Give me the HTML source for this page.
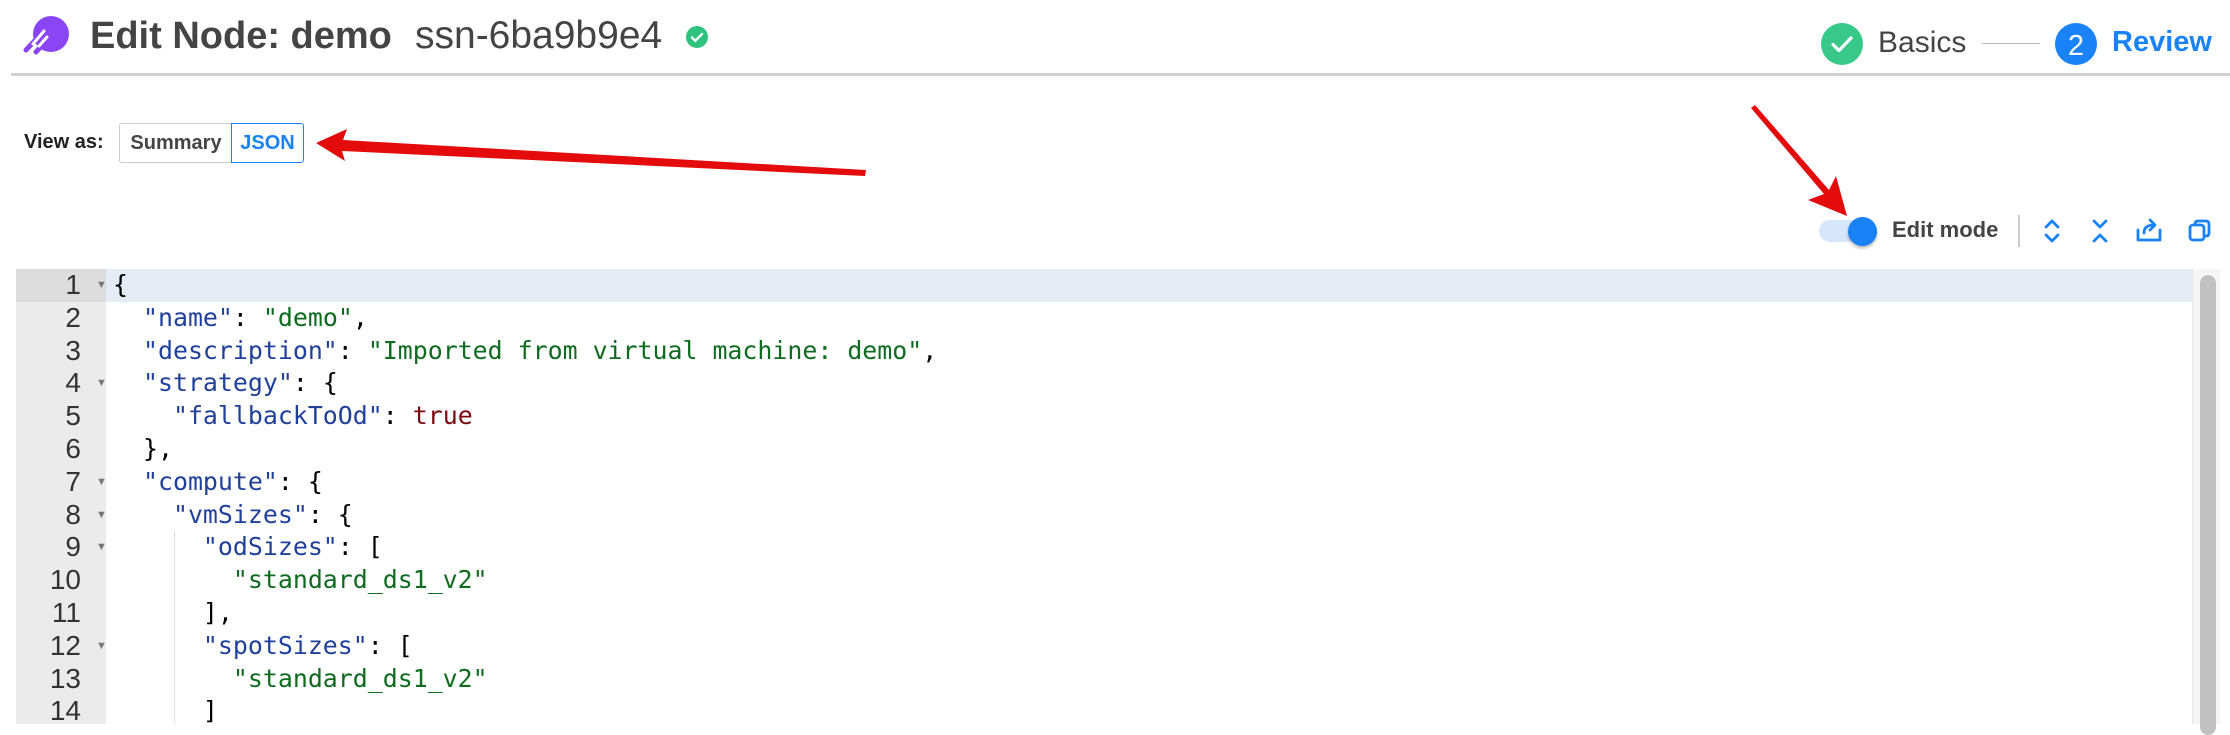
<!DOCTYPE html>
<html><head><meta charset="utf-8"><style>
*{margin:0;padding:0;box-sizing:border-box}
body{width:2230px;height:724px;background:#fff;overflow:hidden;position:relative;font-family:"Liberation Sans",sans-serif;color:#444}
.abs{position:absolute;white-space:nowrap}
.code{font-family:"DejaVu Sans Mono","Liberation Mono",monospace;font-size:24.9px;color:#000}
.k{color:#21409a}.s{color:#0e6b1f}.b{color:#7a0a12}
.ln{position:absolute;left:16px;width:90px;font-family:"Liberation Sans",sans-serif;font-size:28px;color:#333;text-align:right;padding-right:25px;height:32.8px;line-height:32.8px}
.cl{position:absolute;left:113px;height:32.8px;line-height:32.8px;white-space:pre}
.f{position:absolute;left:80px;top:0;font-size:11px;color:#777}
</style></head><body>
<svg class="abs" style="left:0;top:0" width="90" height="70">
<circle cx="51" cy="34" r="18" fill="#8a46f5"/>
<g stroke="#8a46f5" stroke-width="5" stroke-linecap="round"><line x1="26" y1="50" x2="44" y2="31"/><line x1="36" y1="52" x2="47" y2="40"/></g>
<g stroke="#fff" stroke-width="3" stroke-linecap="round"><line x1="33" y1="44" x2="44" y2="31"/><line x1="39" y1="46" x2="47" y2="37"/></g>
</svg>
<div class="abs" style="left:90px;top:15px;font-size:38px;font-weight:bold;color:#444">Edit Node: demo</div>
<div class="abs" style="left:415px;top:14px;font-size:39px;color:#444">ssn-6ba9b9e4</div>
<svg class="abs" style="left:685px;top:25px" width="24" height="24"><circle cx="12" cy="12" r="11" fill="#2ec27e"/><path d="M7 12.5l3.3 3.3L17 9" stroke="#fff" stroke-width="2.4" fill="none" stroke-linecap="round"/></svg>
<svg class="abs" style="left:1820px;top:22px" width="44" height="44"><circle cx="22" cy="22" r="21" fill="#38c98a"/><path d="M13 22.5l6 6L31 16" stroke="#fff" stroke-width="3.2" fill="none" stroke-linecap="round" stroke-linejoin="round"/></svg>
<div class="abs" style="left:1878px;top:26px;font-size:30px;color:#444">Basics</div>
<div class="abs" style="left:1982px;top:43px;width:58px;height:1px;background:#bbb"></div>
<svg class="abs" style="left:2054px;top:22px" width="44" height="44"><circle cx="22" cy="22" r="21" fill="#1a82f7"/><text x="22" y="33" text-anchor="middle" font-size="29" fill="#fff" font-family="Liberation Sans">2</text></svg>
<div class="abs" style="left:2112px;top:26px;font-size:29px;color:#1a82f7;font-weight:bold">Review</div>
<div class="abs" style="left:11px;top:73px;width:2219px;height:3px;background:#d0d0d0"></div>

<div class="abs" style="left:24px;top:131px;font-size:20px;font-weight:bold;color:#222">View as:</div>
<div class="abs" style="left:119px;top:123px;width:113px;height:40px;border:1px solid #ccc;border-right:none;border-radius:3px 0 0 3px;font-size:20px;font-weight:bold;color:#444;line-height:38px;text-align:center">Summary</div>
<div class="abs" style="left:231px;top:123px;width:73px;height:40px;border:1px solid #1a82f7;border-radius:0 3px 3px 0;font-size:20px;font-weight:bold;color:#1a82f7;line-height:38px;text-align:center">JSON</div>

<div class="abs" style="left:1819px;top:220px;width:56px;height:22px;border-radius:11px;background:#d6e7fc"></div>
<div class="abs" style="left:1848px;top:217px;width:29px;height:29px;border-radius:50%;background:#1a82f7;box-shadow:0 2px 3px rgba(0,0,0,.3)"></div>
<div class="abs" style="left:1892px;top:217px;font-size:22px;font-weight:bold;color:#444">Edit mode</div>
<div class="abs" style="left:2018px;top:215px;width:2px;height:32px;background:#ccc"></div>
<svg class="abs" style="left:2040px;top:216px" width="180" height="30" fill="none" stroke="#1a82f7" stroke-width="2.8" stroke-linecap="round" stroke-linejoin="round">
<path d="M6 11l6-6 6 6M6 19l6 6 6-6"/>
<path d="M54 5l6 6 6-6M54 25l6-6 6 6"/>
<path d="M98 14v10h22v-10M104 17q0-8 10-8M110 4l5 5-5 5"/>
<rect x="150" y="9" width="14" height="15" rx="3"/><path d="M155 8q0-3 3-3h8q3 0 3 3v9q0 3-3 3"/>
</svg>

<div class="abs" style="left:16px;top:269px;width:90px;height:455px;background:#ebebeb"></div>
<div class="abs" style="left:16px;top:269px;width:90px;height:32.8px;background:#dcdcdc"></div>
<div class="abs" style="left:106px;top:269px;width:2086px;height:32.8px;background:#e4ebf5"></div>
<div class="abs" style="left:2192px;top:269px;width:28px;height:455px;background:#f5f5f5;border-left:1px solid #e8e8e8"></div>
<div class="abs" style="left:2200px;top:275px;width:16px;height:460px;border-radius:8px;background:#c1c1c1"></div>
<div class="abs" style="left:174px;top:532px;height:192px;border-left:1px dotted #ccc"></div>

<div class="code">
<div class="ln" style="top:269px">1<span class="f">▼</span></div><div class="cl" style="top:269px">{</div>
<div class="ln" style="top:301.8px">2</div><div class="cl" style="top:301.8px">  <span class="k">"name"</span>: <span class="s">"demo"</span>,</div>
<div class="ln" style="top:334.6px">3</div><div class="cl" style="top:334.6px">  <span class="k">"description"</span>: <span class="s">"Imported from virtual machine: demo"</span>,</div>
<div class="ln" style="top:367.4px">4<span class="f">▼</span></div><div class="cl" style="top:367.4px">  <span class="k">"strategy"</span>: {</div>
<div class="ln" style="top:400.2px">5</div><div class="cl" style="top:400.2px">    <span class="k">"fallbackToOd"</span>: <span class="b">true</span></div>
<div class="ln" style="top:433px">6</div><div class="cl" style="top:433px">  },</div>
<div class="ln" style="top:465.8px">7<span class="f">▼</span></div><div class="cl" style="top:465.8px">  <span class="k">"compute"</span>: {</div>
<div class="ln" style="top:498.6px">8<span class="f">▼</span></div><div class="cl" style="top:498.6px">    <span class="k">"vmSizes"</span>: {</div>
<div class="ln" style="top:531.4px">9<span class="f">▼</span></div><div class="cl" style="top:531.4px">      <span class="k">"odSizes"</span>: [</div>
<div class="ln" style="top:564.2px">10</div><div class="cl" style="top:564.2px">        <span class="s">"standard_ds1_v2"</span></div>
<div class="ln" style="top:597px">11</div><div class="cl" style="top:597px">      ],</div>
<div class="ln" style="top:629.8px">12<span class="f">▼</span></div><div class="cl" style="top:629.8px">      <span class="k">"spotSizes"</span>: [</div>
<div class="ln" style="top:662.6px">13</div><div class="cl" style="top:662.6px">        <span class="s">"standard_ds1_v2"</span></div>
<div class="ln" style="top:695.4px">14</div><div class="cl" style="top:695.4px">      ]</div>
</div>

<svg class="abs" style="left:0;top:0;pointer-events:none" width="2230" height="724">
<polygon points="316,143 347,129 343,140 866,170 865,176 342,151 345,161" fill="#e30b0b"/>
<polygon points="1847,216 1808,200 1824,194 1751,108 1755,105 1829,190 1836,176" fill="#e30b0b"/>
</svg>
</body></html>
